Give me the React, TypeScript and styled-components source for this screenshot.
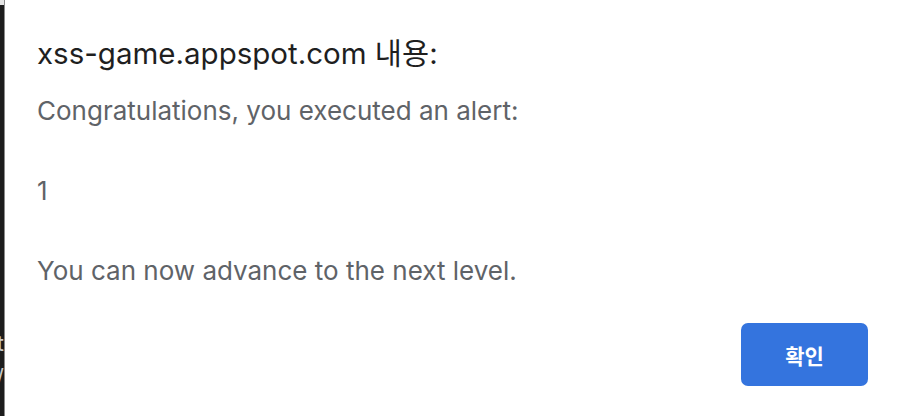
import React from "react";
import styled, { createGlobalStyle } from "styled-components";

const Global = createGlobalStyle`
  html, body { margin: 0; padding: 0; background: #ffffff; }
  body { font-family: Inter, "Noto Sans CJK KR", sans-serif; }
`;

const Page = styled.div`
  display: flex;
  width: 898px;
  height: 416px;
  overflow: hidden;
  background: #ffffff;
`;

const Edge = styled.div`
  width: 4px;
  flex: none;
  display: flex;
  flex-direction: column;
  background: linear-gradient(#e4e4e4 0 5px, #1c1c1c 5px);
  overflow: hidden;
  border-right: 1px solid #8a8a8a;
`;

const EdgeText = styled.div<{ $top: number }>`
  margin-top: ${(p) => p.$top}px;
  font-size: 22px;
  line-height: 24px;
  color: #c8c8c8;
  white-space: nowrap;
  direction: rtl;
  width: 4px;
`;

const Dialog = styled.div`
  flex: 1;
  display: flex;
  flex-direction: column;
  padding: 35px 30px 30px 32px;
`;

const Title = styled.h1`
  margin: 0;
  font-family: Inter, "Noto Sans CJK KR", sans-serif;
  font-weight: 400;
  font-size: 29.5px;
  line-height: 36px;
  color: #1f1f1f;
`;

const Message = styled.p`
  margin: 20px 0 0;
  font-size: 26px;
  line-height: 40px;
  color: #5f6368;
  white-space: pre-line;
`;

const Actions = styled.div`
  margin-top: auto;
  display: flex;
  justify-content: flex-end;
`;

const Button = styled.button`
  width: 127px;
  height: 63px;
  border: none;
  border-radius: 7px;
  background: #3474de;
  color: #ffffff;
  font-family: "Noto Sans CJK KR", sans-serif;
  font-weight: 700;
  font-size: 21px;
  cursor: pointer;
`;

export default function App() {
  return (
    <Page>
      <Global />
      <Edge>
        <EdgeText $top={331}>t</EdgeText>
        <EdgeText $top={10}>/</EdgeText>
      </Edge>
      <Dialog>
        <Title>xss-game.appspot.com 내용:</Title>
        <Message>
          {"Congratulations, you executed an alert:\n\n1\n\nYou can now advance to the next level."}
        </Message>
        <Actions>
          <Button>확인</Button>
        </Actions>
      </Dialog>
    </Page>
  );
}
